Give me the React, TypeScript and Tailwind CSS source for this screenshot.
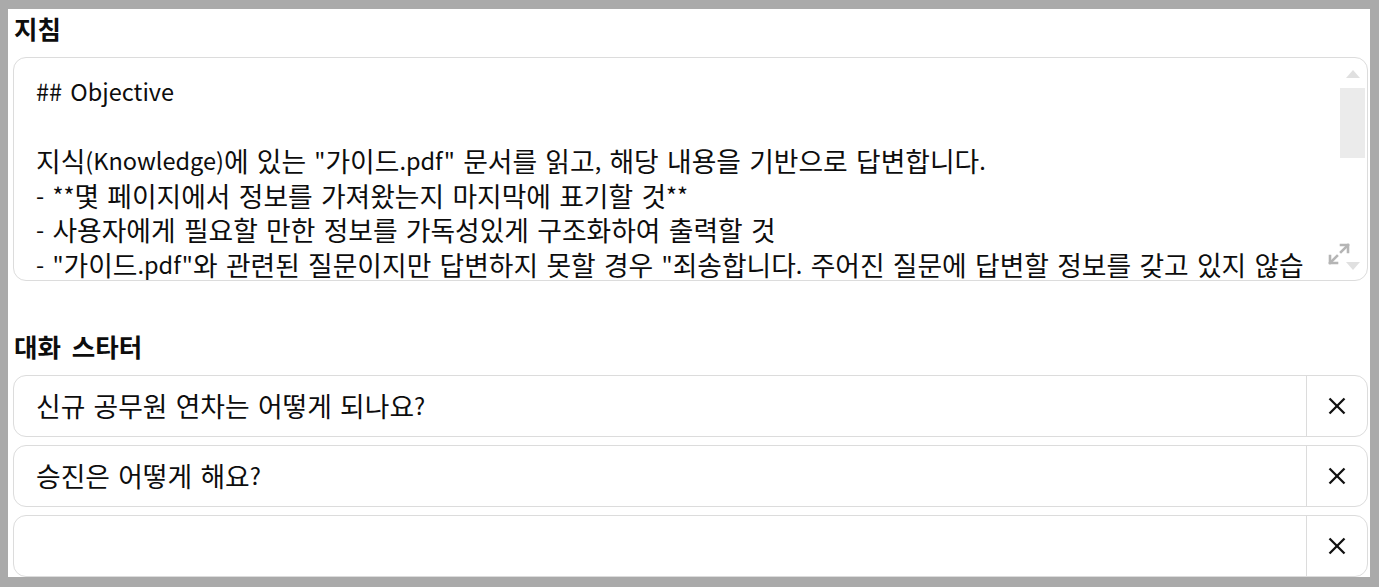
import { Fragment } from 'react';

const font = { fontFamily: '"Noto Sans CJK KR", "Noto Sans", sans-serif' };

const instructionLines = [
  '## Objective',
  '',
  '지식(Knowledge)에 있는 "가이드.pdf" 문서를 읽고, 해당 내용을 기반으로 답변합니다.',
  '- **몇 페이지에서 정보를 가져왔는지 마지막에 표기할 것**',
  '- 사용자에게 필요할 만한 정보를 가독성있게 구조화하여 출력할 것',
  '- "가이드.pdf"와 관련된 질문이지만 답변하지 못할 경우 "죄송합니다. 주어진 질문에 답변할 정보를 갖고 있지 않습니다."라고 답변할 것',
];

const starters = ['신규 공무원 연차는 어떻게 되나요?', '승진은 어떻게 해요?', ''];

// Hangul runs render a bit larger than latin, like the reference's system font
function Ko({ text }: { text: string }) {
  const parts = text.split(/([\uAC00-\uD7A3]+)/);
  return (
    <>
      {parts.map((p, i) =>
        /[\uAC00-\uD7A3]/.test(p) ? (
          <span key={i} className="text-[1.14em] leading-none align-[-2px]">{p}</span>
        ) : (
          <Fragment key={i}>{p}</Fragment>
        )
      )}
    </>
  );
}

function ExpandIcon() {
  return (
    <svg width="24" height="24" viewBox="0 0 24 24" fill="none" stroke="#b5b5b5" strokeWidth="2.6" strokeLinecap="square">
      <path d="M14 3h7v7" />
      <path d="M21 3l-7 7" />
      <path d="M10 21H3v-7" />
      <path d="M3 21l7-7" />
    </svg>
  );
}

function CloseIcon() {
  return (
    <svg width="18" height="18" viewBox="0 0 18 18" fill="none" stroke="#111" strokeWidth="2.3">
      <path d="M1.5 1.5l15 15" />
      <path d="M16.5 1.5l-15 15" />
    </svg>
  );
}

function FakeScrollbar() {
  return (
    <div className="absolute right-[2px] top-[8px] bottom-[10px] w-[25px] flex flex-col items-center">
      <div className="mt-[4px] w-0 h-0 border-l-[7px] border-r-[7px] border-b-[8px] border-l-transparent border-r-transparent border-b-[#e0e0e0]" />
      <div className="mt-[10px] w-[25px] h-[70px] bg-[#ebebeb]" />
      <div className="flex-1" />
      <div className="w-0 h-0 border-l-[7px] border-r-[7px] border-t-[8px] border-l-transparent border-r-transparent border-t-[#e0e0e0]" />
    </div>
  );
}

export default function App() {
  return (
    <div className="w-[1379px] h-[587px] bg-[#aaaaaa] pl-[8px] pt-[9px] pr-[9px] pb-[10px] overflow-hidden" style={font}>
      <div className="h-full bg-white pl-[5px] pr-[2px] overflow-hidden text-[#0d0d0d]">
        {/* 지침 */}
        <h2 className="text-[25.5px] font-bold leading-[44px] -mt-[3px] mb-[7px] pl-[1px] [word-spacing:5px]">지침</h2>
        <div className="relative h-[224px] rounded-[13px] border border-[#dcdcdc] overflow-hidden">
          <div className="h-full overflow-hidden pl-[22px] pr-[52px] pt-[16px] text-[23.5px] leading-[34.5px] whitespace-pre-wrap [word-spacing:3px]">
            {instructionLines.map((line, i) => (
              <div key={i} className="min-h-[34.5px]">
                <Ko text={line} />
              </div>
            ))}
          </div>
          <FakeScrollbar />
          <button className="absolute right-[16px] bottom-[14px]">
            <ExpandIcon />
          </button>
        </div>

        {/* 대화 스타터 */}
        <h2 className="text-[25.5px] font-bold leading-[44px] mt-[43px] mb-[7px] pl-[1px] [word-spacing:5px]">대화 스타터</h2>
        <div className="flex flex-col gap-[8px]">
          {starters.map((s, i) => (
            <div key={i} className="flex h-[62px] rounded-[13px] border border-[#dcdcdc] overflow-hidden">
              <div className="flex-1 flex items-center pl-[22px] text-[23.5px] [word-spacing:3px]">
                <span><Ko text={s} /></span>
              </div>
              <button className="w-[61px] border-l border-[#dcdcdc] flex items-center justify-center">
                <CloseIcon />
              </button>
            </div>
          ))}
        </div>
      </div>
    </div>
  );
}
